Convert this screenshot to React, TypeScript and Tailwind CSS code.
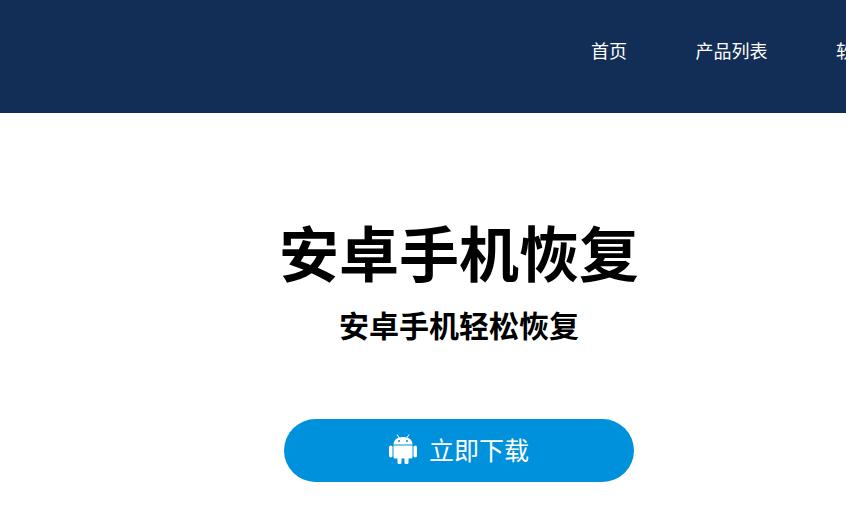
import type { ReactElement } from 'react';

const navItems = ['首页', '产品列表', '软件下载'];

function AndroidIcon(): ReactElement {
  return (
    <svg viewBox="0 0 28 30" className="mb-[3px] h-[30px] w-[28px] fill-white">
      <path d="M4.5 10.5C4.5 6 8 3 14 3s9.5 3 9.5 7.5z" />
      <path d="M8 .5l2.5 4M20 .5l-2.5 4" stroke="#fff" strokeWidth="1" />
      <circle cx="10" cy="7" r="1" fill="#0091dc" />
      <circle cx="18" cy="7" r="1" fill="#0091dc" />
      <path d="M4.5 11.5h19V23a1.5 1.5 0 0 1-1.5 1.5H6A1.5 1.5 0 0 1 4.5 23z" />
      <rect x="0" y="11.5" width="3.5" height="12" rx="1.75" />
      <rect x="24.5" y="11.5" width="3.5" height="12" rx="1.75" />
      <rect x="8.5" y="23" width="4" height="7" rx="1.5" />
      <rect x="15.5" y="23" width="4" height="7" rx="1.5" />
    </svg>
  );
}

export default function App(): ReactElement {
  return (
    <div className="h-[528px] w-[846px] overflow-hidden bg-white font-['Liberation_Sans','Noto_Sans_CJK_SC',sans-serif] text-black">
      <header className="flex h-[113px] items-start overflow-hidden bg-[#132e56] pl-[591px] pt-[40px]">
        <nav className="flex shrink-0 gap-[68.5px] whitespace-nowrap text-[18px] leading-[24px] text-white">
          {navItems.map((item) => (
            <a key={item} href="#">
              {item}
            </a>
          ))}
        </nav>
      </header>

      <main className="flex w-[918px] flex-col items-center pt-[109px]">
        <h1 className="text-[60px] font-bold leading-[70px]">安卓手机恢复</h1>
        <p className="mt-[15px] text-[30px] font-bold leading-[40px]">安卓手机轻松恢复</p>
        <a
          href="#"
          className="mt-[72px] flex h-[63px] w-[350px] items-center justify-center gap-[12px] rounded-full bg-[#0091dc] text-[25px] text-white"
        >
          <AndroidIcon />
          <span className="mt-[3px]">立即下载</span>
        </a>
      </main>
    </div>
  );
}
